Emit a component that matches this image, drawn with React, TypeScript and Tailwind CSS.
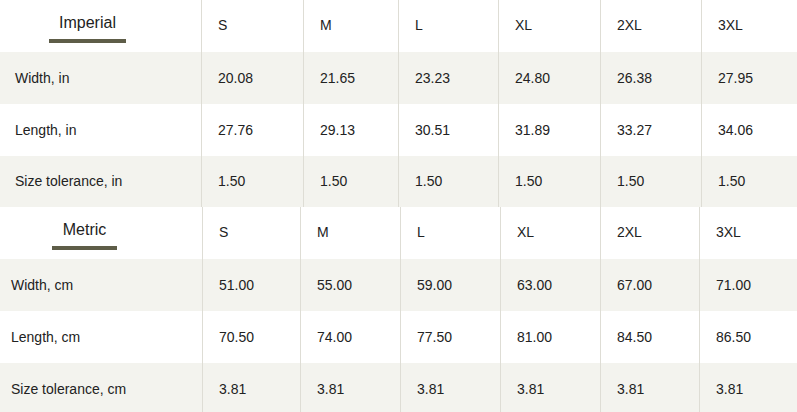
const sizes = ['S', 'M', 'L', 'XL', '2XL', '3XL']

const imperial = {
  title: 'Imperial',
  widths: [201, 102, 95, 100, 102, 101, 96],
  labelPad: 'pl-[15px]',
  titleBox: 'ml-[49px] w-[77px]',
  rows: [
    { label: 'Width, in', values: ['20.08', '21.65', '23.23', '24.80', '26.38', '27.95'] },
    { label: 'Length, in', values: ['27.76', '29.13', '30.51', '31.89', '33.27', '34.06'] },
    { label: 'Size tolerance, in', values: ['1.50', '1.50', '1.50', '1.50', '1.50', '1.50'] },
  ],
}

const metric = {
  title: 'Metric',
  widths: [202, 98, 100, 100, 100, 99, 98],
  labelPad: 'pl-[11px]',
  titleBox: 'ml-[52px] w-[65px]',
  rows: [
    { label: 'Width, cm', values: ['51.00', '55.00', '59.00', '63.00', '67.00', '71.00'] },
    { label: 'Length, cm', values: ['70.50', '74.00', '77.50', '81.00', '84.50', '86.50'] },
    { label: 'Size tolerance, cm', values: ['3.81', '3.81', '3.81', '3.81', '3.81', '3.81'] },
  ],
}

type Table = typeof imperial

function SizeTable({ table, lastHeight }: { table: Table; lastHeight: string }) {
  const w = table.widths
  return (
    <div>
      <div className="flex h-[52px] bg-white">
        <div className="shrink-0" style={{ width: w[0] }}>
          <div className={`${table.titleBox} border-b-4 border-[#5e5d48] pt-[13px] pb-[6px] text-center text-[16px] leading-[20px]`}>
            {table.title}
          </div>
        </div>
        {sizes.map((s, i) => (
          <div
            key={s}
            className="flex shrink-0 items-center border-l border-[#deddd5] pl-4 pb-[1px]"
            style={{ width: w[i + 1] }}
          >
            {s}
          </div>
        ))}
      </div>
      {table.rows.map((row, r) => (
        <div
          key={row.label}
          className={`flex ${r === table.rows.length - 1 ? lastHeight : 'h-[52px]'} ${r % 2 === 0 ? 'bg-[#f3f3ee]' : 'bg-white'}`}
        >
          <div className={`flex shrink-0 items-center ${table.labelPad}`} style={{ width: w[0] }}>
            {row.label}
          </div>
          {row.values.map((v, i) => (
            <div
              key={i}
              className="flex shrink-0 items-center border-l border-[#deddd5] pl-4"
              style={{ width: w[i + 1] }}
            >
              {v}
            </div>
          ))}
        </div>
      ))}
    </div>
  )
}

export default function App() {
  return (
    <div className="h-[412px] w-[797px] overflow-hidden bg-white font-['Liberation_Sans',Arial,sans-serif] text-[14px] text-[#222]">
      <SizeTable table={imperial} lastHeight="h-[51px]" />
      <SizeTable table={metric} lastHeight="h-[52px]" />
    </div>
  )
}
